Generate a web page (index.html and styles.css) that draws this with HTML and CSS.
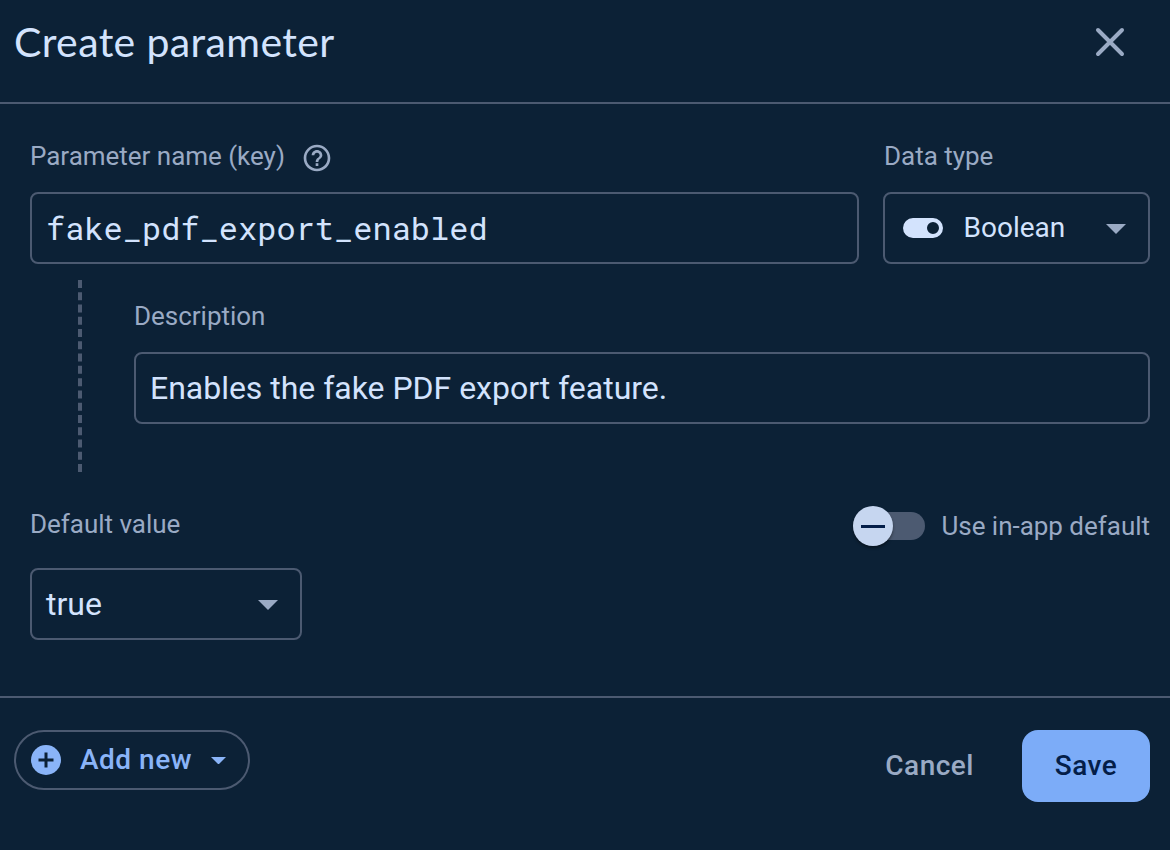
FILE: index.html
```html
<!DOCTYPE html>
<html lang="en">
<head>
<meta charset="utf-8">
<title>Create parameter</title>
<link rel="stylesheet" href="styles.css">
</head>
<body>
<form class="panel">
  <header class="header">
    <h1 class="title">Create parameter</h1>
    <svg class="close" viewBox="0 0 30 30"><path d="M3 3L27 27M27 3L3 27"/></svg>
  </header>
  <main class="content">
    <div class="key-row">
      <div class="field">
        <div class="label-row">
          <span class="label label-key">Parameter name (key)</span>
          <svg class="help" viewBox="0 0 24 24"><path d="M11 18h2v-2h-2v2zm1-16C6.480 2 2 6.480 2 12s4.480 10 10 10 10-4.480 10-10S17.520 2 12 2zm0 18c-4.410 0-8-3.590-8-8s3.590-8 8-8 8 3.590 8 8-3.590 8-8 8zm0-14c-2.210 0-4 1.790-4 4h2c0-1.100.9-2 2-2s2 .9 2 2c0 2-3 1.750-3 5h2c0-2.250 3-2.500 3-5 0-2.210-1.790-4-4-4z"/></svg>
        </div>
        <div class="box mono"><span>fake_pdf_export_enabled</span></div>
      </div>
      <div class="field">
        <div class="label-row"><span class="label label-type">Data type</span></div>
        <div class="box type-select">
          <svg class="bool" viewBox="0 0 40 20"><path fill-rule="evenodd" d="M10 0H30A10 10 0 0 1 30 20H10A10 10 0 0 1 10 0ZM30 4A6 6 0 1 0 30 16A6 6 0 1 0 30 4Z"/></svg>
          <span class="type-name">Boolean</span>
          <svg class="arrow" viewBox="0 0 20 10"><path d="M0 0H20L10 10Z"/></svg>
        </div>
      </div>
    </div>
    <div class="description">
      <div class="branch"></div>
      <div class="field">
        <div class="label-row"><span class="label label-desc">Description</span></div>
        <div class="box"><span class="desc-text">Enables the fake PDF export feature.</span></div>
      </div>
    </div>
    <div class="default-row">
      <span class="label label-default">Default value</span>
      <div class="toggle">
        <div class="track"><div class="thumb"><div class="dash"></div></div></div>
        <span class="label label-toggle">Use in-app default</span>
      </div>
    </div>
    <div class="box value-select">
      <span class="value">true</span>
      <svg class="arrow" viewBox="0 0 20 10"><path d="M0 0H20L10 10Z"/></svg>
    </div>
  </main>
  <footer class="footer">
    <div class="add">
      <svg class="plus" viewBox="0 0 30 30"><circle cx="15" cy="15" r="15"/><path d="M15 7.500V22.500M7.500 15H22.500"/></svg>
      <span class="add-text">Add new</span>
      <svg class="add-arrow" viewBox="0 0 14 7"><path d="M0 0H14L7 7Z"/></svg>
    </div>
    <div class="actions">
      <span class="cancel">Cancel</span>
      <div class="save"><span>Save</span></div>
    </div>
  </footer>
</form>
</body>
</html>
```
FILE: styles.css
```css
* { box-sizing: border-box; }
body {
  margin: 0;
  background: #0c2136;
  color: #d3e3fd;
  font-family: Roboto, sans-serif;
}
svg { display: block; flex: none; }
span { white-space: nowrap; }
.panel { height: 850px; display: flex; flex-direction: column; }
.header {
  height: 104px;
  padding: 0 45px 18px 14px;
  border-bottom: 2px solid #4c5a71;
  display: flex;
  align-items: center;
  justify-content: space-between;
}
.title {
  margin: 0;
  font: 400 41px/48px Lato, sans-serif;
  letter-spacing: 0.38px;
}
.close { width: 30px; height: 30px; stroke: #9aaac4; stroke-width: 4; stroke-linecap: round; }
.content {
  height: 594px;
  padding: 32px 20px 0 30px;
  border-bottom: 2px solid #4c5a71;
}
.key-row { display: grid; grid-template-columns: 829px 267px; gap: 24px; }
.label-row { height: 56px; padding-bottom: 16px; display: flex; align-items: center; gap: 16px; }
.label { color: #9aaac4; font-size: 26px; line-height: 40px; letter-spacing: -0.02px; }
.label-type { margin-left: 1px; }
.help { width: 32px; height: 32px; fill: #9aaac4; margin-top: 4px; }
.box {
  height: 72px;
  border: 2px solid #4c5a71;
  border-radius: 8px;
  padding: 0 14px;
  display: flex;
  align-items: center;
  font-size: 32px;
}
.mono { padding-bottom: 2px; font-family: "Roboto Mono", "DejaVu Sans Mono", monospace; }
.desc-text { letter-spacing: -0.02px; }
.type-select { padding: 0 22px 0 18px; }
.bool { width: 40px; height: 20px; fill: #d3e3fd; }
.type-name { font-size: 28px; margin: 0 0 2px 20.500px; }
.arrow { width: 20px; height: 10px; fill: #9aaac4; margin: 2px 0 0 auto; }
.description {
  margin: 16px 0 32px 48px;
  display: grid;
  grid-template-columns: 4px 1fr;
  column-gap: 52px;
}
.branch { height: 192px; border-left: 4px dashed #4c5a71; }
.description .label-row { margin-top: 16px; }
.default-row { height: 44px; display: flex; justify-content: space-between; }
.toggle { display: flex; align-items: center; gap: 16px; }
.track {
  width: 72px;
  height: 28px;
  border-radius: 14px;
  background: #4c5a71;
  display: flex;
  align-items: center;
}
.thumb {
  width: 40px;
  height: 40px;
  border-radius: 50%;
  background: #c6d6f0;
  box-shadow: 0 2px 3px rgba(0, 0, 0, 0.4);
  display: flex;
  align-items: center;
  justify-content: center;
}
.dash { width: 24px; height: 3px; background: #041e49; }
.value-select { width: 272px; margin-top: 20px; padding: 0 22px 0 14px; }
.footer {
  padding: 32px 20px 0 14px;
  display: flex;
  justify-content: space-between;
  align-items: flex-start;
}
.add {
  width: 236px;
  height: 60px;
  border: 2px solid #4c5a71;
  border-radius: 30px;
  padding: 0 22px 0 15px;
  display: flex;
  align-items: center;
  color: #8ab4f8;
  font-size: 28px;
  font-weight: 500;
}
.plus { width: 30px; height: 30px; fill: #8ab4f8; stroke: none; }
.plus path { stroke: #0c2136; stroke-width: 3; }
.add-text { margin: 0 0 2px 19px; letter-spacing: 0.5px; }
.add-arrow { width: 15px; height: 7.500px; fill: #8ab4f8; margin: 1px 0 0 auto; }
.actions { display: flex; align-items: center; gap: 48px; font-size: 28px; font-weight: 500; letter-spacing: 0.5px; }
.cancel { color: #9aaac4; margin-bottom: 2px; }
.save {
  width: 128px;
  height: 72px;
  padding-bottom: 2px;
  border-radius: 16px;
  background: #7cacf8;
  color: #041e49;
  display: flex;
  align-items: center;
  justify-content: center;
}
```
